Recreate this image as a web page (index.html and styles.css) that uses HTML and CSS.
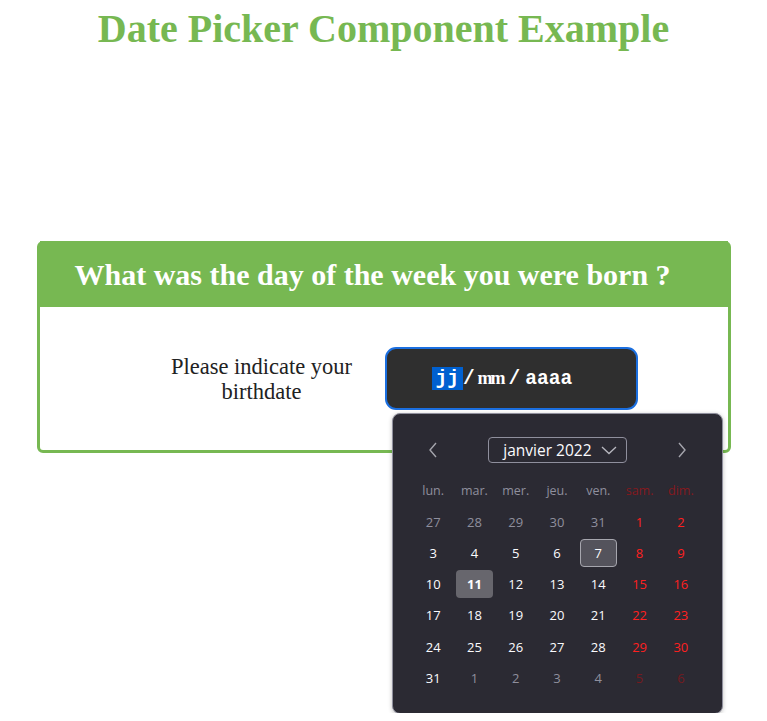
FILE: index.html
```html
<!DOCTYPE html>
<html lang="fr">
<head>
<meta charset="utf-8">
<title>Date Picker Component Example</title>
<link rel="stylesheet" href="styles.css">
</head>
<body>
<h1 class="title">Date Picker Component Example</h1>
<section class="card">
  <h2 class="card-head">What was the day of the week you were born ?</h2>
  <div class="card-body">
    <label class="label" for="bd">Please indicate your birthdate</label>
    <div class="field">
      <div class="input" id="bd"><span class="seg sel">jj</span><span class="sep">/</span><span class="seg mm">mm</span><span class="sep">/</span><span class="seg">aaaa</span></div>
      <div class="picker">
        <div class="picker-head">
          <span class="nav"><svg width="12" height="18" viewBox="0 0 12 18"><path d="M9 2 L3 9 L9 16" fill="none" stroke="#a5a5ad" stroke-width="1.4"/></svg></span>
          <span class="month">janvier 2022<svg class="chev" width="16" height="10" viewBox="0 0 16 10"><path d="M1 2 L8 8.5 L15 2" fill="none" stroke="#b8b8c0" stroke-width="1.3"/></svg></span>
          <span class="nav"><svg width="12" height="18" viewBox="0 0 12 18"><path d="M3 2 L9 9 L3 16" fill="none" stroke="#a5a5ad" stroke-width="1.4"/></svg></span>
        </div>
        <div class="grid">
          <span class="wd">lun.</span><span class="wd">mar.</span><span class="wd">mer.</span><span class="wd">jeu.</span><span class="wd">ven.</span><span class="wd we">sam.</span><span class="wd we">dim.</span>
          <span class="d out">27</span><span class="d out">28</span><span class="d out">29</span><span class="d out">30</span><span class="d out">31</span><span class="d red">1</span><span class="d red">2</span>
          <span class="d">3</span><span class="d">4</span><span class="d">5</span><span class="d">6</span><span class="d"><i class="today">7</i></span><span class="d red">8</span><span class="d red">9</span>
          <span class="d">10</span><span class="d"><i class="selected">11</i></span><span class="d">12</span><span class="d">13</span><span class="d">14</span><span class="d red">15</span><span class="d red">16</span>
          <span class="d">17</span><span class="d">18</span><span class="d">19</span><span class="d">20</span><span class="d">21</span><span class="d red">22</span><span class="d red">23</span>
          <span class="d">24</span><span class="d">25</span><span class="d">26</span><span class="d">27</span><span class="d">28</span><span class="d red">29</span><span class="d red">30</span>
          <span class="d">31</span><span class="d out">1</span><span class="d out">2</span><span class="d out">3</span><span class="d out">4</span><span class="d outred">5</span><span class="d outred">6</span>
        </div>
      </div>
    </div>
  </div>
</section>
</body>
</html>
```
FILE: styles.css
```css
html {
  min-height: 100%;
}
body {
  margin: 8px;
  min-height: 705px;
  font-family: "Liberation Serif", "Times New Roman", serif;
  background: #fff;
}
.title {
  margin: 0;
  padding-top: 0;
  text-align: center;
  color: #77b852;
  font-size: 40px;
  line-height: 42px;
  font-weight: bold;
}
.card {
  width: 688px;
  margin: 191px auto 0;
  border: 3px solid #77b852;
  border-radius: 6px;
}
.card-head {
  margin: -3px 0 0;
  background: #77b852;
  color: #fff;
  font-size: 30px;
  line-height: 34px;
  font-weight: bold;
  padding: 17px 0 15px 35px;
}
.card-body {
  display: flex;
  align-items: center;
  padding: 40px 0 40px 122px;
}
.label {
  width: 200px;
  text-align: center;
  font-size: 22.5px;
  line-height: 25px;
  color: #222;
  margin-right: 23px;
}
.field {
  position: relative;
}
.input {
  box-sizing: border-box;
  width: 253px;
  height: 63px;
  background: #2f2f2f;
  border: 2px solid #1b6fe0;
  border-radius: 11px;
  display: flex;
  align-items: center;
  padding-left: 45px;
  font-family: "Liberation Mono", "Courier New", monospace;
  font-weight: bold;
  font-size: 19.5px;
  color: #fff;
}
.seg {
  padding: 0;
}
.sel {
  background: #0060d0;
  padding: 1px 4px 0;
}
.mm {
  font-family: "Liberation Serif", serif;
  font-size: 18px;
  letter-spacing: -2px;
  padding: 0 5px 0 3px;
}
.sep {
  padding: 0;
}
.sep + .seg:last-child {
  padding-left: 5px;
}
.picker {
  position: absolute;
  left: 7px;
  top: 66px;
  box-sizing: border-box;
  width: 331px;
  height: 301px;
  background: #2b2a33;
  border: 1px solid #8f8f9d;
  border-radius: 8px;
  box-shadow: 0 1px 4px rgba(0,0,0,0.25);
  padding: 23px 20px 0;
  font-family: "Open Sans", "Noto Sans", sans-serif;
  font-size: 13px;
}
.picker-head {
  display: flex;
  align-items: center;
  justify-content: space-between;
  height: 26px;
  padding: 0 14px 0 14px;
  margin-bottom: 12px;
}
.nav {
  display: flex;
  align-items: center;
}
.month {
  box-sizing: border-box;
  height: 26px;
  width: 139px;
  border: 1px solid #8f8f9d;
  border-radius: 4px;
  display: flex;
  align-items: center;
  justify-content: flex-end;
  gap: 9px;
  padding-right: 9px;
  color: #fbfbfe;
  font-size: 15.5px;
}
.chev {
  display: block;
}
.grid {
  display: grid;
  grid-template-columns: repeat(7, 1fr);
  grid-auto-rows: 31.2px;
}
.grid > span {
  display: flex;
  align-items: center;
  justify-content: center;
}
.wd {
  color: #8f8f9d;
  font-size: 12.5px;
}
.wd.we {
  color: #85191e;
}
.d {
  color: #fbfbfe;
}
.d.out {
  color: #8f8f9d;
}
.d.red {
  color: #ff2020;
}
.d.outred {
  color: #741a1f;
}
.d i {
  font-style: normal;
  box-sizing: border-box;
  width: 37px;
  height: 28px;
  display: flex;
  align-items: center;
  justify-content: center;
  border-radius: 4px;
}
.today {
  background: #54535c;
  border: 1px solid #a6a6ae;
}
.selected {
  background: #67666d;
  font-weight: bold;
}
```
